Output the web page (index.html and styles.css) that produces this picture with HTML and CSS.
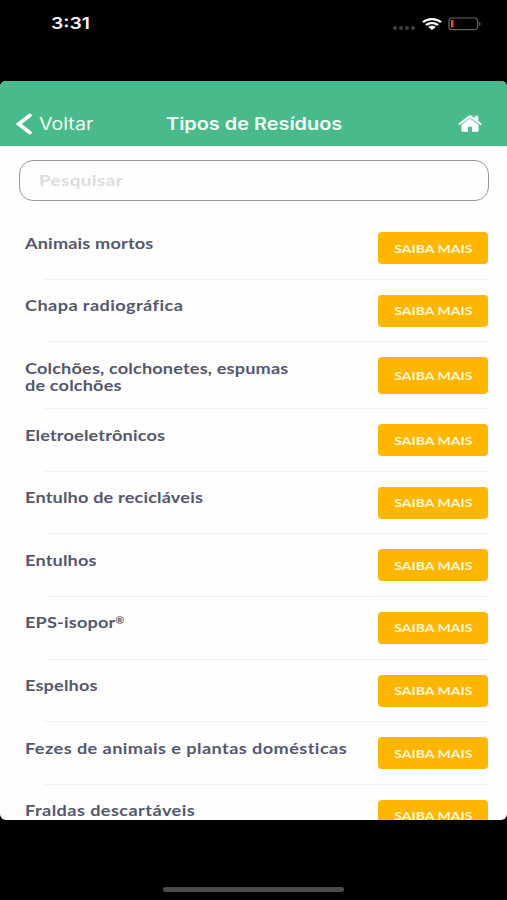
FILE: index.html
```html
<!DOCTYPE html>
<html lang="pt-BR">
<head>
<meta charset="utf-8">
<title>Tipos de Resíduos</title>
<link rel="stylesheet" href="styles.css">
</head>
<body>
<div class="phone">
  <div class="status">
    <span class="time">3:31</span>
    <div class="indicators">
      <div class="dots"><i></i><i></i><i></i><i></i></div>
      <svg class="wifi" viewBox="0 0 20 12" preserveAspectRatio="none" fill="#fff">
        <path d="M10 0C6.200 0 2.700 1.300.2 3.500L1.900 5.100C4.100 3.300 6.900 2.300 10 2.300s5.900 1 8.100 2.800l1.700-1.600C17.300 1.300 13.800 0 10 0z"/>
        <path d="M10 4C7.400 4 5 4.900 3.200 6.300l1.700 1.600C6.300 6.800 8.100 6.200 10 6.200s3.700.6 5.100 1.700l1.700-1.600C15 4.900 12.600 4 10 4z"/>
        <path d="M10 7.800c-1.500 0-2.800.5-3.800 1.300L10 12l3.800-2.900C12.800 8.300 11.500 7.800 10 7.800z"/>
      </svg>
      <svg class="battery" viewBox="0 0 33 14">
        <rect x=".9" y="1" width="28.700" height="11.600" rx="3.200" fill="none" stroke="#646464" stroke-width="1.200"/>
        <rect x="3" y="3" width="2.600" height="7.600" rx=".8" fill="#ff3b30"/>
        <path d="M31.200 5v4c.8-.3 1.300-1.100 1.300-2s-.5-1.700-1.300-2z" fill="#707070"/>
      </svg>
    </div>
  </div>
  <main class="app">
    <header class="bar">
      <a class="back"><svg viewBox="0 0 16 22"><path d="M14 2.300 2.700 11 14 19.700" fill="none" stroke="#fff" stroke-width="3.600" stroke-linecap="round" stroke-linejoin="miter"/></svg><span>Voltar</span></a>
      <h1><span>Tipos de Resíduos</span></h1>
      <svg class="home" viewBox="0 0 24 17" fill="#fff">
        <path d="M.1 8.800 11 .6c.6-.5 1.400-.5 2 0l3.600 2.700V.8h3.700v5.300L23.900 8.800l-1.200 1.500L12 2.500 1.300 10.300z"/>
        <path d="M12 3.300 3.400 9.700v6c0 .6.4 1 1 1h5.700v-4.900h3.800v4.900h5.700c.6 0 1-.4 1-1v-6z"/>
      </svg>
    </header>
    <div class="search"><span>Pesquisar</span></div>
    <ul class="list">
      <li><span class="name">Animais mortos</span><a class="more"><span>SAIBA MAIS</span></a></li>
      <li><span class="name wide">Chapa radiográfica</span><a class="more"><span>SAIBA MAIS</span></a></li>
      <li class="tall"><span class="name">Colchões, colchonetes, espumas<br>de colchões</span><a class="more"><span>SAIBA MAIS</span></a></li>
      <li><span class="name">Eletroeletrônicos</span><a class="more"><span>SAIBA MAIS</span></a></li>
      <li><span class="name">Entulho de recicláveis</span><a class="more"><span>SAIBA MAIS</span></a></li>
      <li><span class="name">Entulhos</span><a class="more"><span>SAIBA MAIS</span></a></li>
      <li><span class="name">EPS-isopor<span class="reg">®</span></span><a class="more"><span>SAIBA MAIS</span></a></li>
      <li><span class="name">Espelhos</span><a class="more"><span>SAIBA MAIS</span></a></li>
      <li><span class="name wide">Fezes de animais e plantas domésticas</span><a class="more"><span>SAIBA MAIS</span></a></li>
      <li><span class="name wide">Fraldas descartáveis</span><a class="more"><span>SAIBA MAIS</span></a></li>
    </ul>
  </main>
  <div class="handle"></div>
</div>
</body>
</html>
```

FILE: styles.css
```css
* { box-sizing: border-box; }
body { margin: 0; background: #000; font-family: Lato, sans-serif; }
.phone { width: 507px; height: 900px; overflow: hidden; background: #000; display: flex; flex-direction: column; }
.status { flex: none; height: 81px; padding: 13px 26px 0 51px; display: flex; justify-content: space-between; align-items: flex-start; }
.time { font: 600 16.5px/21px Inter, sans-serif; color: #f4f4f4; transform: scaleX(1.17); transform-origin: left; }
.indicators { display: flex; align-items: center; height: 21px; }
.dots { display: flex; gap: 2px; padding-top: 8px; margin-right: 7px; }
.dots i { width: 4px; height: 4px; border-radius: 50%; background: #3e3e3e; }
.wifi { width: 20px; height: 12px; margin-right: 6px; }
.battery { width: 33px; height: 14px; }
.app { flex: none; height: 739px; background: #fefefe; border-radius: 6px; overflow: hidden; }
.bar { height: 65px; padding: 20px 25px 0 16px; background: #48ba8c; color: #f2fff9; display: grid; grid-template-columns: 149.500px 1fr 24px; align-items: center; font: 16.800px/24px Inter, sans-serif; }
.back { display: flex; align-items: center; gap: 7px; }
.back svg { width: 16px; height: 22px; }
.back span, .bar h1 span { display: inline-block; transform: scaleX(1.17); transform-origin: left; white-space: nowrap; }
.search span, .name { display: inline-block; transform: scaleX(1.25); transform-origin: left; white-space: nowrap; }
.bar h1 { margin: 0; font-size: 17px; font-weight: 600; }
.home { width: 24px; height: 17px; }
.search { margin: 14px 18px 0 19px; height: 41px; padding: 0 19px 2px; border: 1.500px solid #999; border-radius: 14px; display: flex; align-items: center; color: #dcdcdc; font-size: 15px; font-weight: 700; letter-spacing: .35px; }
.list { margin: 16px 19px 0 25px; padding: 0; list-style: none; }
.list li { height: 62.600px; padding-top: 15px; display: flex; justify-content: space-between; align-items: flex-start; background: linear-gradient(#f2f2f4, #f2f2f4) 19px 100% / 100% 1px no-repeat; }
.list .tall { height: 67px; }
.name { padding-top: 2.500px; font-size: 14.500px; line-height: 17.300px; font-weight: 700; letter-spacing: .13px; color: #55586d; }
.wide { letter-spacing: .34px; }
.reg { font-size: 8.500px; line-height: 0; vertical-align: 4px; letter-spacing: 0; }
.more { width: 110px; height: 32px; border-radius: 4px; background: #ffb600; display: flex; align-items: center; justify-content: center; flex: none; }
.tall .more { height: 37px; }
.more span { color: #fff8d8; font-size: 12px; font-weight: 700; transform: scaleX(1.17); white-space: nowrap; }
.handle { flex: none; width: 181px; height: 5px; margin: 67px 0 0 163px; border-radius: 3px; background: #4b4b4b; }
```
